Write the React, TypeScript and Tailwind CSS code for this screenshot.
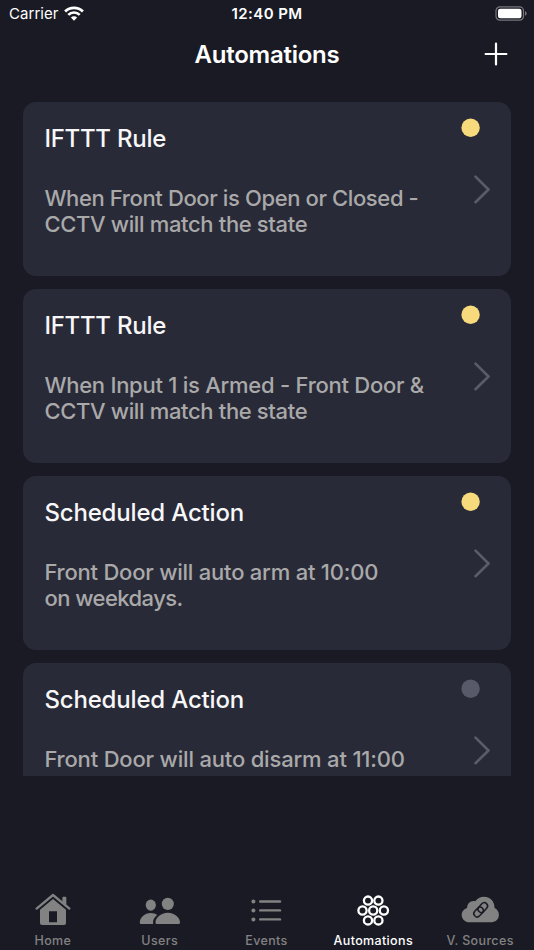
import React from 'react';
import { clsx } from 'clsx';

type Automation = { id: number; title: string; titleClass: string; lines: { text: string; className: string }[]; enabled: boolean };

const automations: Automation[] = [
  {
    id: 1,
    title: 'IFTTT Rule',
    titleClass: 'tracking-[-0.26px]',
    lines: [
      { text: 'When Front Door is Open or Closed -', className: 'tracking-[-0.38px]' },
      { text: 'CCTV will match the state', className: 'tracking-[-0.35px]' },
    ],
    enabled: true,
  },
  {
    id: 2,
    title: 'IFTTT Rule',
    titleClass: 'tracking-[-0.26px]',
    lines: [
      { text: 'When Input 1 is Armed - Front Door &', className: 'tracking-[-0.26px]' },
      { text: 'CCTV will match the state', className: 'tracking-[-0.35px]' },
    ],
    enabled: true,
  },
  {
    id: 3,
    title: 'Scheduled Action',
    titleClass: 'tracking-[-0.17px]',
    lines: [
      { text: 'Front Door will auto arm at 10:00', className: 'tracking-[-0.22px]' },
      { text: 'on weekdays.', className: 'tracking-[-0.54px]' },
    ],
    enabled: true,
  },
  {
    id: 4,
    title: 'Scheduled Action',
    titleClass: 'tracking-[-0.17px]',
    lines: [{ text: 'Front Door will auto disarm at 11:00', className: 'tracking-[-0.18px]' }],
    enabled: false,
  },
];

const HomeIcon = () => (
  <svg width="44" height="36" viewBox="0 0 44 36" fill="currentColor">
    <path d="M5.6 16.6L22 3L38.4 16.6" fill="none" stroke="currentColor" strokeWidth="2.3" strokeLinecap="round" strokeLinejoin="round" />
    <path d="M31.4 5.8a1 1 0 0 1 1-1h1.9a1 1 0 0 1 1 1v7.5l-3.9-3.2z" />
    <path fillRule="evenodd" d="M22 7L35 17.8V31a2 2 0 0 1-2 2H11a2 2 0 0 1-2-2V17.8zM18 19.3v11h8v-11z" />
  </svg>
);

const UsersIcon = () => (
  <svg width="44" height="36" viewBox="0 0 44 36" fill="currentColor">
    <ellipse cx="12.8" cy="13.1" rx="5.1" ry="5.6" />
    <ellipse cx="29.8" cy="11.9" rx="6" ry="6.2" />
    <path d="M3.2 31.9c-1 0-1.4-.6-1.4-1.5 0-4.6 4.8-9.4 11-9.4 2.5 0 4.7.7 6.3 1.9-2.6 2-4.1 4.8-4.1 7.5 0 .6.1 1 .3 1.5z" />
    <path d="M19.2 31.9c-1.1 0-1.7-.5-1.7-1.5 0-4.5 5-9.7 12.3-9.7s12.2 5.2 12.2 9.7c0 1-.6 1.5-1.7 1.5z" />
  </svg>
);

const EventsIcon = () => (
  <svg width="44" height="36" viewBox="0 0 44 36" fill="currentColor">
    {[9.5, 18.4, 27.4].map((y) => (
      <g key={y}>
        <circle cx="8.4" cy={y} r="2" />
        <path d={`M15.2 ${y}H35`} stroke="currentColor" strokeWidth="2.4" strokeLinecap="round" />
      </g>
    ))}
  </svg>
);

const AutomationsIcon = () => (
  <svg width="44" height="36" viewBox="0 0 44 36" fill="none" stroke="currentColor" strokeWidth="2.3">
    {[[16, 8.6], [26.4, 8.6], [10.5, 18.5], [21.2, 18.5], [31.9, 18.5], [16, 28.4], [26.4, 28.4]].map(([cx, cy]) => (
      <circle key={`${cx}-${cy}`} cx={cx} cy={cy} r="4.1" />
    ))}
  </svg>
);

const SourcesIcon = () => (
  <svg width="44" height="36" viewBox="0 0 44 36" fill="currentColor">
    <path d="M10.5 30.2C6 30.2 2.7 27 2.7 22.9c0-3.4 2.3-6 5.4-6.9-.1-4 2.900-6.900 6.400-6.900.7 0 1.200.1 1.700.2C18.200 6.500 21.300 4.700 25 4.700c5.900 0 10.500 4.600 10.500 10.600v.8c2.700 1.100 4.400 3.700 4.400 6.700 0 4.200-3.100 7.400-7.400 7.400z" />
    <g className="text-[#1a1a24]" fill="none" stroke="currentColor" strokeWidth="1.5" transform="rotate(-47 21.7 17.8)">
      <rect x="13.2" y="14.5" width="10.9" height="6.6" rx="3.3" />
      <rect x="19.3" y="14.5" width="10.9" height="6.6" rx="3.3" />
    </g>
  </svg>
);

const tabs = [
  { label: 'Home', icon: HomeIcon },
  { label: 'Users', icon: UsersIcon },
  { label: 'Events', icon: EventsIcon },
  { label: 'Automations', icon: AutomationsIcon, active: true },
  { label: 'V. Sources', icon: SourcesIcon },
];

function StatusBar() {
  return (
    <div className="grid h-7 grid-cols-[1fr_auto_1fr] items-center pl-[9px] pr-[7px] text-[15px] text-white">
      <div className="flex items-center gap-[5px]">
        <span className="tracking-[0.05px]">Carrier</span>
        <svg className="mb-[2px]" width="20" height="15" viewBox="0 0 20 15" fill="none" stroke="currentColor" strokeWidth="2.7">
          <path d="M1.1 5.5a12.5 12.5 0 0 1 17.8 0" />
          <path d="M4.3 8.9a8 8 0 0 1 11.4 0" />
          <path d="M10 14.7l-3.1-3.2a4.3 4.3 0 0 1 6.2 0z" fill="currentColor" stroke="none" />
        </svg>
      </div>
      <span className="mr-[2px] whitespace-nowrap font-semibold tracking-[0.42px]">12:40 PM</span>
      <svg className="mb-[1px] justify-self-end" width="32" height="15" viewBox="0 0 32 15">
        <rect x="1" y="0.8" width="27.5" height="13.4" rx="4" fill="none" stroke="#77767c" strokeWidth="1.2" />
        <rect x="3" y="2.8" width="23.5" height="9.4" rx="2.2" fill="#fff" />
        <path d="M30 5.3c1.2.4 1.6 1.2 1.6 2.2s-.4 1.8-1.6 2.2z" fill="#77767c" />
      </svg>
    </div>
  );
}

function AutomationCard({ automation }: { automation: Automation }) {
  return (
    <div className="flex h-[174px] shrink-0 justify-between rounded-[13px] bg-[#292a38] pl-[21px] pr-5">
      <div className="pt-[21px]">
        <h2 className={clsx('text-[24px] font-medium leading-8 text-[#f7f7f8]', automation.titleClass)}>{automation.title}</h2>
        <div className="mt-[30px] text-[22px] font-medium leading-[26px] text-[#a9a9a9]">
          {automation.lines.map((line) => (
            <p key={line.text} className={clsx('whitespace-nowrap', line.className)}>{line.text}</p>
          ))}
        </div>
      </div>
      <div className="flex flex-col items-end pt-4">
        <svg className="mr-[10px]" width="20" height="20" viewBox="0 0 20 20">
          <circle cx="9.6" cy="9.7" r="9.2" fill={automation.enabled ? '#f7da7b' : '#595a69'} />
        </svg>
        <svg className="mt-[36px]" width="18" height="30" viewBox="0 0 18 30" fill="none" stroke="#5b5c69" strokeWidth="2.6" strokeLinecap="round" strokeLinejoin="round">
          <path d="M2.5 2.6L15.5 15.5L2.5 28.2" />
        </svg>
      </div>
    </div>
  );
}

export default function App() {
  return (
    <div className="flex h-[950px] w-[534px] flex-col overflow-hidden bg-[#1a1a24] font-['Inter',sans-serif]">
      <StatusBar />
      <header className="grid h-[52px] grid-cols-[1fr_auto_1fr] items-center px-[22px]">
        <h1 className="col-start-2 mt-px text-[24px] font-semibold tracking-[-0.24px] text-white">Automations</h1>
        <button className="justify-self-end text-white" aria-label="Add automation">
          <svg width="32" height="24" viewBox="0 0 32 24" fill="none" stroke="currentColor" strokeWidth="2.2" strokeLinecap="round">
            <path d="M16 1.6V22.4M5.6 12H26.4" />
          </svg>
        </button>
      </header>

      <main className="mx-[23.4px] mt-[22px] flex h-[673.5px] flex-col gap-[13px] overflow-hidden">
        {automations.map((automation) => (
          <AutomationCard key={automation.id} automation={automation} />
        ))}
      </main>

      <nav className="mt-auto grid h-[58px] grid-cols-5">
        {tabs.map(({ label, icon: Icon, active }) => (
          <button key={label} className={clsx('flex flex-col items-center', active ? 'text-white' : 'text-[#828282]')}>
            <Icon />
            <span className="mr-px mt-[5px] whitespace-nowrap text-[12.5px] font-medium leading-4 tracking-[0.36px]">{label}</span>
          </button>
        ))}
      </nav>
    </div>
  );
}
